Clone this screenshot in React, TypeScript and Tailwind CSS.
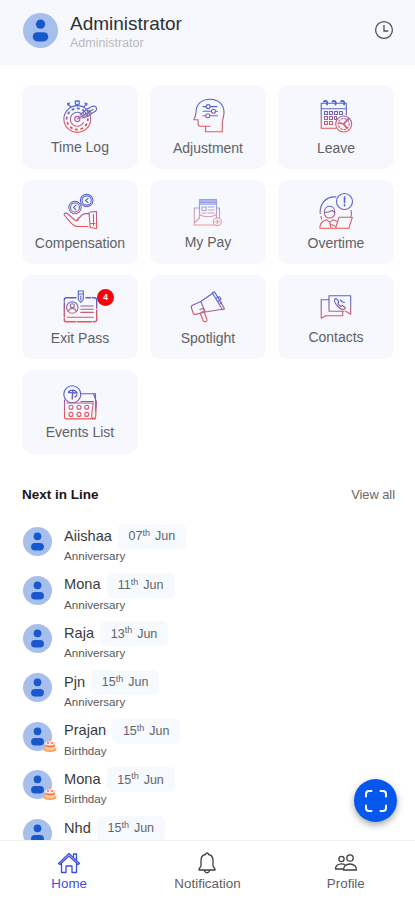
import React from 'react';
import clsx from 'clsx';

interface MenuItem {
  label: string;
  icon: React.ReactNode;
  offset: string;
  badge?: number;
  faded?: boolean;
}

interface EventItem {
  name: string;
  day: string;
  type?: 'Anniversary' | 'Birthday';
}

const TimeLogIcon = (
  <>
    <circle cx="19.3" cy="24" r="13.4" />
    <circle cx="19.3" cy="24" r="10.6" strokeDasharray="1.5 4.05" strokeWidth="1.8" />
    <path d="M25.5 27.5a7 7 0 1 1-2.5-9.2" />
    <circle cx="19.3" cy="24" r="2.6" />
    <circle cx="19.3" cy="8" r="2" />
    <path d="M17 6h4.6M19.3 9v2M9.5 10l2-2M12.5 11.5l-3-3M26 11.5l3-3M27 8l2 2" />
    <path d="M19.3 24 35 14.5M23 19l3 4M25 18l3 4.5M27 17l3 4.5M29 16l3 4M31 15l2.5 3.5M22 20l7-6 5-2.5c5-2 6 4 2 5.5l-6 4-6 2" />
  </>
);

const AdjustmentIcon = (
  <>
    <path d="M10 17.5C10 9 16 4.3 24 4.3c8.500 0 14.500 5.700 14 14-.2 4-1.700 6-1.700 10v8.400H19.500v-5.400h-5c-2 0-2.400-1-2.400-3v-3.500H8.500c-.8 0-.8-.7-.3-1.300 1-1.700 1.800-3.500 1.800-6Z" />
    <path d="M17 11.6h3M24.500 11.6H31M17 16.2h8M29.500 16.2h2M17 20.8h2.500M24 20.8h7.500M19.500 31.3h4.500" />
    <circle cx="22.2" cy="11.6" r="2" />
    <circle cx="27.5" cy="16.2" r="2" />
    <circle cx="21.8" cy="20.8" r="2" />
  </>
);

const LeaveIcon = (
  <>
    <path d="M22 33.3H7.200V8.200h25.100V20M7.200 13.800h25.100" />
    <path d="M10 6.500c2-1.500 4 0 3 3M18.500 6.500c2-1.500 4 0 3 3M27 6.500c2-1.500 4 0 3 3" strokeWidth="1.8" />
    <path d="M10.500 16.500h3v3h-3zM15.500 16.500h3v3h-3zM20.500 16.500h3v3h-3zM25.500 16.500h3v3h-3zM10.500 21.500h3v3h-3zM15.500 21.500h3v3h-3zM20.500 21.500h2v3h-2zM10.500 26.500h3v3h-3zM15.500 26.500h3v3h-3z" />
    <circle cx="29.7" cy="29" r="8" />
    <circle cx="29.7" cy="29" r="5.5" strokeDasharray="1.5 1.8" />
    <path d="m29.700 29 5-5.500M29.700 29l-4-1M29.700 29l3 4" strokeWidth="1.8" />
  </>
);

const CompensationIcon = (
  <>
    <circle cx="28.7" cy="10.5" r="6.3" />
    <circle cx="28.7" cy="10.5" r="4.6" />
    <path d="m30 8.500-2.500 2 2.500 2" />
    <circle cx="17" cy="17.5" r="6.2" />
    <circle cx="17" cy="17.5" r="4.5" />
    <path d="m18 15.200-2.500 2.300 2.500 2.300" />
    <path d="M30 36.500H19c-4.300 0-8-6-12-10.500-2-2.200.2-4 2.300-2.500l7.500 6.500c1.800 1.300 4.200.4 3.300-1.700M18.500 30.500l5.500-5.500c1.800-1.500 4-1.500 7-1.300" />
    <path d="m31 22.500 1.200 14.500M32.500 22l6-.5v17l-6.500-1M35.500 24.500v11M33 33.500h4" />
  </>
);

const PayIcon = (
  <>
    <path d="M13.500 28V9.500h17V28M13.500 14.200h17" />
    <path d="M14 11h16M14 12.700h16" strokeWidth="1.5" />
    <path d="M16 17h4v3.500h-4zM22 17h6M22 20h6M16 23h4M22 23h6" />
    <path d="M13.500 18H8.300v17h20M30.500 18h3v10M13.500 24.500c5 3 12 3 17 0M8.300 33l5-5" />
    <circle cx="31.3" cy="31.8" r="4" />
    <path d="M29 31.800h4.600M31.300 29.500v4.500" />
  </>
);

const OvertimeIcon = (
  <>
    <circle cx="30.5" cy="11.5" r="8" />
    <path d="M30.500 7v5.500M30.500 14.500v1.200" strokeWidth="1.6" />
    <path d="M22 7C12 6 5.500 14 6.200 23.500M7 26.500l.7 2.500M37 20.500c1 3 .8 4-.2 6" />
    <path d="M10.500 21.500c.2-7 10-7 10.200 0v2c-.8 6-9.400 6-10.200 0zM10.500 22.500c4 0 6-1 8-2 .5 1 1.200 2 2.500 2" />
    <path d="M20.500 38.300H6c-.7-5 3.500-8.300 7-8.500l2.800 2.500 3-2.500c1.500.1 2.600.5 3.800 1.400M15.700 32.500l1.200 5" />
    <path d="m21.500 38.300 3.500-11h13.300l-3.500 11zM17 34.500l4 1.500" />
  </>
);

const ExitPassIcon = (
  <>
    <path
      d="M18 12.700H8.500c-1.500 0-2.200.8-2.200 2.200V35c0 1.200.8 1.800 2 1.800h28.300c1.400 0 2.100-.8 2.100-2V15c0-1.500-.8-2.300-2.200-2.300h-8.500"
      strokeDasharray="14 1.8"
      strokeWidth="1.4"
    />
    <path d="M20.300 6h5v8.500l-2.500 3-2.500-3zM20.300 9h5M22.800 11v4" />
    <circle cx="14.3" cy="22.5" r="5.7" />
    <circle cx="14.3" cy="20.8" r="2" />
    <path d="M10.500 26.500c.5-4 7-4 7.500 0M22.800 21h12.500M22.800 24.200h12.500M22.800 27.400h12.500M9.500 32.300h25.800" />
  </>
);

const SpotlightIcon = (
  <>
    <path d="m14.800 16.500 12-8.300M19.200 27l17-2.800M14.800 16.500 6.500 20.200c-1.300.7-1.500 1.700-1 3l1.700 4.800c.5 1.300 1.300 1.800 2.700 1.400l9.300-2.400z" />
    <path d="m26.300 7.700 10 17 2.200-.8-10-17.200zM30.500 13l3-1.200 1.600 2.500-2.800 2M34 18.500l1.800-1.200" />
    <path d="m14 24.500 3.500-1.200 1 2.700-3.500 1.500M14.300 28.500l2.700 7c1 2.300 4.700 1 3.800-1.400l-2.400-6.600" />
  </>
);

const ContactsIcon = (
  <>
    <path d="M15 14.800H7.200v18.500l4.500-2.600h17v-4.500" />
    <path d="M30 26.200H15V10.800h21.700v18.500l-5-3.100" />
    <path d="M21.500 13.500c-2 1.500-1 4.300 2 7.500s5.500 4.300 7.200 3l.8-1-3-2.500-1.700 1c-1-.7-2.500-2-3-3.200l1.200-1.500-2.400-3zM26.500 15l2 2 2 .5" />
  </>
);

const EventsIcon = (
  <>
    <circle cx="14.3" cy="14.3" r="8.5" />
    <path d="M10.500 12.500c1-3 6.500-3.500 8.500.5l-8.500-.5ZM14.800 10l-.6 9M17 17l2-2" strokeWidth="1.4" />
    <path d="M23 13.800h14.500v18M6.500 20v17c0 1.200.7 1.900 2 1.900h29M23 21.500h12.500M9 23h26.200L33.500 36c-.2 2 3.800 3.800 4.200.5l.8-14.500-2.800-7.500" />
    <circle cx="13" cy="27.2" r="2" />
    <circle cx="21" cy="27.2" r="2" />
    <circle cx="28.7" cy="27.2" r="2" />
    <circle cx="13" cy="34.4" r="2" />
    <circle cx="21" cy="34.4" r="2" />
    <circle cx="28.7" cy="34.4" r="2" />
  </>
);

const menu: MenuItem[] = [
  { label: 'Time Log', icon: TimeLogIcon, offset: 'mt-px' },
  { label: 'Adjustment', icon: AdjustmentIcon, offset: 'mt-[2px]' },
  { label: 'Leave', icon: LeaveIcon, offset: 'mt-[2px]' },
  { label: 'Compensation', icon: CompensationIcon, offset: 'mt-[2px]' },
  { label: 'My Pay', icon: PayIcon, offset: 'mt-px', faded: true },
  { label: 'Overtime', icon: OvertimeIcon, offset: 'mt-[2px]' },
  { label: 'Exit Pass', icon: ExitPassIcon, offset: 'mt-[2px]', badge: 4 },
  { label: 'Spotlight', icon: SpotlightIcon, offset: 'mt-[2px]' },
  { label: 'Contacts', icon: ContactsIcon, offset: 'mt-px' },
  { label: 'Events List', icon: EventsIcon, offset: 'mt-px' },
];

const events: EventItem[] = [
  { name: 'Aiishaa', day: '07', type: 'Anniversary' },
  { name: 'Mona', day: '11', type: 'Anniversary' },
  { name: 'Raja', day: '13', type: 'Anniversary' },
  { name: 'Pjn', day: '15', type: 'Anniversary' },
  { name: 'Prajan', day: '15', type: 'Birthday' },
  { name: 'Mona', day: '15', type: 'Birthday' },
  { name: 'Nhd', day: '15' },
];

const Avatar = ({ className }: { className: string }) => (
  <svg viewBox="0 0 36 36" className={clsx('block shrink-0', className)}>
    <circle cx="18" cy="18" r="18" fill="#a6bfec" />
    <circle cx="18" cy="11.5" r="4.8" fill="#1858cf" />
    <rect x="10" y="19.8" width="16" height="9.4" rx="4.7" fill="#1858cf" />
  </svg>
);

const Cake = () => (
  <svg viewBox="0 0 14 16" className="absolute left-[20px] top-[15px] h-[16px] w-[14px]">
    <path d="M7 1v4" stroke="#e9b65c" strokeWidth="1.5" />
    <ellipse cx="7" cy="12.3" rx="6.5" ry="2.7" fill="#f6a04d" />
    <path d="M1.800 6.500c0-3 10.400-3 10.400 0v5.300c-1.500 2.200-8.900 2.200-10.400 0z" fill="#f9c9a0" />
    <ellipse cx="7" cy="6.3" rx="4.5" ry="1.7" fill="#fff0df" />
    <path d="M2 8.500c1.500 2 2.500-.5 3.800 1 1.200 1 1.700-1 3 0 1.400.8 2-1 3.200-1" fill="none" stroke="#ee5f4d" strokeWidth="1.2" />
    <circle cx="5" cy="6" r=".9" fill="#ee5f4d" />
    <circle cx="9" cy="6" r=".9" fill="#ee5f4d" />
  </svg>
);

const MenuCard = ({ item, id }: { item: MenuItem; id: string }) => (
  <div className="relative flex h-[84px] flex-col items-center rounded-[10px] bg-[#f6f8fe] pt-[10px]">
    <svg
      viewBox="0 0 44 41"
      className={clsx('block h-[41px] w-[44px] shrink-0', item.faded ? 'opacity-50' : 'opacity-85')}
      fill="none"
      stroke={`url(#${id})`}
      strokeWidth="1.1"
      strokeLinecap="round"
      strokeLinejoin="round"
    >
      <defs>
        <linearGradient id={id} gradientUnits="userSpaceOnUse" x1="0" y1="8" x2="0" y2="36">
          <stop offset="0" stopColor="#2f49cf" />
          <stop offset=".3" stopColor="#4b4db5" />
          <stop offset=".7" stopColor="#c2435f" />
          <stop offset="1" stopColor="#e93a3a" />
        </linearGradient>
      </defs>
      {item.icon}
    </svg>
    <span className={clsx('text-[14px] leading-[20px] text-[#606164]', item.offset)}>{item.label}</span>
    {item.badge && (
      <span className="absolute left-[75px] top-[14px] flex h-[17px] w-[17px] items-center justify-center rounded-full bg-[#fb0007] text-[9px] font-bold text-white">
        {item.badge}
      </span>
    )}
  </div>
);

const EventRow = ({ event }: { event: EventItem }) => (
  <div className="flex h-[48.7px] shrink-0">
    <div className="relative mt-[3px] h-[29px] w-[41px] shrink-0">
      <Avatar className="h-[29px] w-[29px]" />
      {event.type === 'Birthday' && <Cake />}
    </div>
    <div>
      <div className="flex h-[25px] items-center gap-[6px]">
        <span className="-mt-[2px] text-[14.6px] leading-[20px] text-[#3a3b3e]">{event.name}</span>
        <span className="flex h-[25px] w-[68px] items-center justify-center rounded-[5px] bg-[#f6f9fd] text-[12.5px] text-[#626569]">
          {event.day}
          <sup className="-top-[3px] text-[9px] leading-none">th</sup>
          <span className="ml-[5px]">Jun</span>
        </span>
      </div>
      {event.type && (
        <div className="-mt-px text-[11.6px] leading-[15px] text-[#57585b]">{event.type}</div>
      )}
    </div>
  </div>
);

export default function App() {
  return (
    <div className="relative flex h-[900px] w-[415px] flex-col overflow-hidden bg-white font-['Liberation_Sans',Arial,sans-serif]">
      <header className="flex h-[65px] shrink-0 items-start bg-[#f6f8fd] pl-[23px] pr-[21px]">
        <Avatar className="mt-[13px] h-[35px] w-[35px]" />
        <div className="ml-[12px] mt-[12px] flex-1">
          <div className="text-[19px] leading-[24px] text-[#2f3033]">Administrator</div>
          <div className="text-[12.5px] leading-[14px] text-[#b9babe]">Administrator</div>
        </div>
        <svg viewBox="0 0 20 20" className="mt-[20px] h-[20px] w-[20px]" fill="none" stroke="#505155" strokeWidth="1.3">
          <circle cx="10" cy="10" r="8.4" />
          <path d="M10 5v6h4.300" />
        </svg>
      </header>

      <section className="mx-[22px] mt-[20px] grid shrink-0 grid-cols-[116px_116px_116px] gap-x-[12px] gap-y-[11px]">
        {menu.map((item, i) => (
          <MenuCard key={item.label} item={item} id={`menu-icon-${i}`} />
        ))}
      </section>

      <div className="mt-[31px] flex h-[20px] shrink-0 items-center justify-between pl-[22px] pr-[20px]">
        <h2 className="text-[13.5px] font-bold text-[#17181a]">Next in Line</h2>
        <span className="text-[12.8px] text-[#66676b]">View all</span>
      </div>

      <section className="mt-[19px] flex min-h-0 flex-1 flex-col overflow-hidden pl-[23px]">
        {events.map((event, i) => (
          <EventRow key={i} event={event} />
        ))}
      </section>

      {/* Scan button */}
      <button className="absolute left-[354px] top-[779px] flex h-[43px] w-[43px] items-center justify-center rounded-full bg-[#0557ee] shadow-[0_3px_7px_rgba(0,0,0,0.35)]">
        <svg viewBox="0 0 24 24" className="h-[24px] w-[24px]" fill="none" stroke="#fff" strokeWidth="2" strokeLinecap="round">
          <path d="M2 7.500V5a3 3 0 0 1 3-3h2.500M16.500 2H19a3 3 0 0 1 3 3v2.500M22 16.500V19a3 3 0 0 1-3 3h-2.500M7.500 22H5a3 3 0 0 1-3-3v-2.500" />
        </svg>
      </button>

      <nav className="grid h-[60px] shrink-0 grid-cols-3 border-t border-[#f2f2f3] bg-white text-[13.4px] leading-[16px] text-[#606164]">
        <div className="flex flex-col items-center pt-[10px] text-[#3b4fe0]">
          <svg viewBox="0 0 24 24" className="h-[24px] w-[24px]" fill="none" stroke="currentColor" strokeWidth="1.3" strokeLinejoin="round">
            <path d="m1.500 12.500 10.500-10 10.500 10-1.400 1L12 5 2.900 13.500zM4.500 12v9.500H9V15h6v6.500h4.500V12M16.500 6V3h3v6" />
          </svg>
          <span className="mt-px">Home</span>
        </div>
        <div className="flex flex-col items-center pt-[10px]">
          <svg viewBox="0 0 24 24" className="h-[24px] w-[24px]" fill="none" stroke="#3e3f42" strokeWidth="1.3" strokeLinejoin="round">
            <path d="M10.500 3.500c0-2 3-2 3 0 3 .5 4.500 3 4.500 6v5.500l2 3.200v.8H4v-.8L6 15V9.500c0-3 1.500-5.500 4.500-6ZM9.500 19.500c.5 3 4.500 3 5 0" />
          </svg>
          <span className="mt-px">Notification</span>
        </div>
        <div className="flex flex-col items-center pt-[10px]">
          <svg viewBox="0 0 24 24" className="h-[24px] w-[24px]" fill="none" stroke="#3e3f42" strokeWidth="1.3" strokeLinejoin="round">
            <circle cx="16" cy="7" r="3.2" />
            <circle cx="7.5" cy="8" r="2.6" />
            <path d="M9.500 19c-.3-3.500 2.500-6 6.500-6s6.800 2.500 6.500 6zM9.500 18h-8c-.3-3.300 2.500-5.200 6-5.200 1.500 0 2.700.3 3.700.9" />
          </svg>
          <span className="mt-px">Profile</span>
        </div>
      </nav>
    </div>
  );
}
